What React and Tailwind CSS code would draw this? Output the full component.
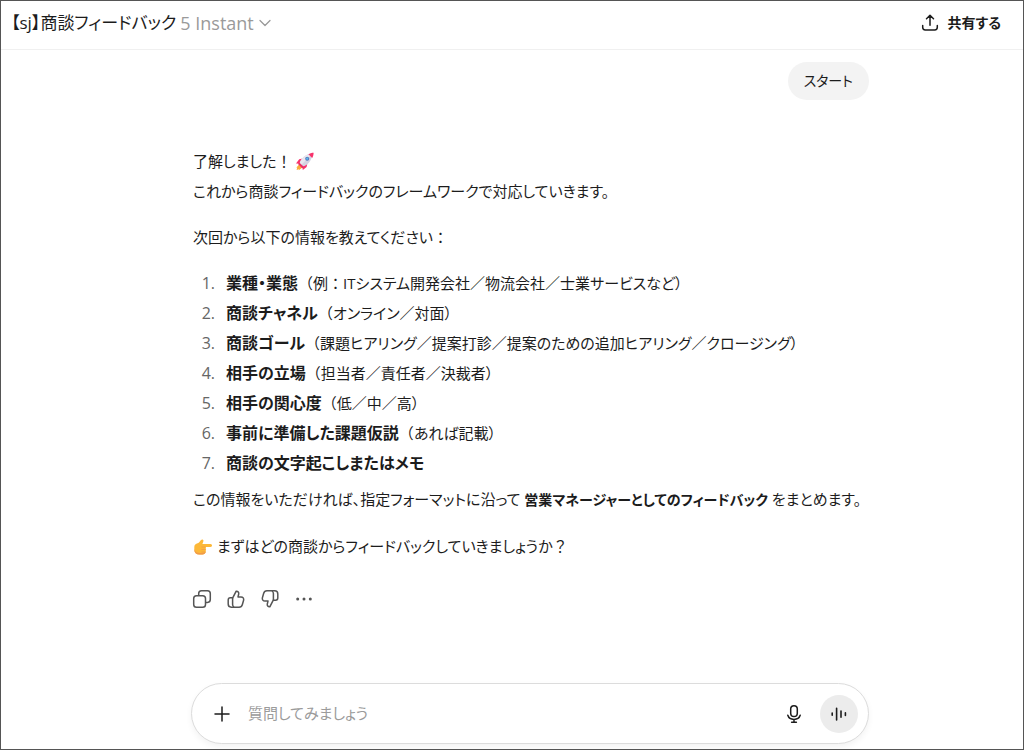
import React from "react";

const ShareIcon = () => (
  <svg viewBox="0 0 20 20" className="w-5 h-5" fill="none" stroke="currentColor" strokeWidth="1.5" strokeLinecap="round" strokeLinejoin="round">
    <path d="M10 12.2V2.4M6.5 5.700 10 2.200l3.500 3.500" />
    <path d="M2.700 12.500v1.800A2.600 2.600 0 0 0 5.300 16.900h9.400a2.600 2.600 0 0 0 2.600-2.600v-1.800" />
  </svg>
);

const ChevronIcon = () => (
  <svg viewBox="0 0 14 14" className="w-3.5 h-3.5" fill="none" stroke="currentColor" strokeWidth="1.3" strokeLinecap="round" strokeLinejoin="round">
    <path d="m2 4.5 5 5 5-5" />
  </svg>
);

const CopyIcon = () => (
  <svg viewBox="0 0 20 20" className="w-5 h-5" fill="none" stroke="currentColor" strokeWidth="1.5" strokeLinejoin="round">
    <rect x="1.7" y="6.7" width="11.8" height="11.6" rx="2.8" />
    <path d="M6.7 6.5V4.6a2.8 2.8 0 0 1 2.8-2.8h6a2.8 2.8 0 0 1 2.8 2.8v6a2.8 2.8 0 0 1-2.8 2.8h-1.8" />
  </svg>
);

const ThumbIcon = ({ down }) => (
  <svg
    viewBox="0 0 20 20"
    className={down ? "w-5 h-5 rotate-180" : "w-5 h-5"}
    fill="none"
    stroke="currentColor"
    strokeWidth="1.5"
    strokeLinejoin="round"
  >
    <path d="M6.6 9.2 10.2 2.2c1.8-.2 2.9 1.2 2.5 2.8l-.7 2.9h3.1c1.8 0 3 1.6 2.5 3.3l-1.3 4.5a3.4 3.4 0 0 1-3.3 2.5H5.3a3.1 3.1 0 0 1-3.1-3.1V11a2.2 2.2 0 0 1 2.2-2.2h2.4" />
    <path d="M6.6 9v6.4c0 1.2.5 2 1.4 2.6" />
  </svg>
);

const MoreIcon = () => (
  <svg viewBox="0 0 20 20" className="w-5 h-5" fill="currentColor">
    <circle cx="3.7" cy="10" r="1.5" />
    <circle cx="10" cy="10" r="1.5" />
    <circle cx="16.3" cy="10" r="1.5" />
  </svg>
);

const PlusIcon = () => (
  <svg viewBox="0 0 20 20" className="w-5 h-5" fill="none" stroke="currentColor" strokeWidth="1.5" strokeLinecap="round">
    <path d="M10 3v14M3 10h14" />
  </svg>
);

const MicIcon = () => (
  <svg viewBox="0 0 20 20" className="w-5 h-5" fill="none" stroke="currentColor" strokeWidth="1.5" strokeLinecap="round">
    <rect x="6.7" y="1.7" width="6.6" height="10.8" rx="3.3" />
    <path d="M3.8 11.3c.8 2.6 3.1 4.1 6.2 4.1s5.4-1.5 6.2-4.1M10 15.5v2.6M7.6 18.2h4.8" />
  </svg>
);

const VoiceIcon = () => (
  <svg viewBox="0 0 20 20" className="w-5 h-5" fill="none" stroke="currentColor" strokeWidth="1.6" strokeLinecap="round">
    <path d="M3.2 9v2.2M7.6 4.3v11.6M12 7v6.2M16.4 8.7v2.8" />
  </svg>
);

const RocketIcon = () => (
  <svg viewBox="0 0 20 20" role="img" aria-label="ロケット" className="inline-block w-5 h-5 align-[-4px]">
    <path d="M5.2 12.2 1.2 16.8l1-.2-.6 2.4 2.4-.7-.2 1 4.5-3.6z" fill="#fbab3a" />
    <path d="m7.8 7.6-3.6.6L1 12.4l4.6.3zM12.4 12.2l-.8 3.8L7.8 19l-.6-4.6z" fill="#f8316b" />
    <path d="M4.6 12.2C6 7.4 10.4 3 17.6 2.2c-.6 7-4.4 11.6-9.6 13.4z" fill="#d5d3e2" />
    <path d="M4.6 12.2C6 7.4 10.4 3 17.6 2.2L6.2 14z" fill="#e9e6ef" />
    <path d="M13.4 3.2c1.4-.9 3.3-1.5 5.2-1.5 0 2-.5 3.8-1.4 5.2z" fill="#f8316b" />
    <circle cx="12.2" cy="7.7" r="2" fill="#5178b5" />
    <circle cx="12.2" cy="7.7" r="1.1" fill="#5cb5f2" />
    <path d="m4.2 11.4 4.8 4.6-1.8 1.2-4.2-4.2z" fill="#e92f66" />
  </svg>
);

const PointIcon = () => (
  <svg viewBox="0 0 20 20" role="img" aria-label="右向きの指" className="inline-block w-5 h-5 align-[-5px]">
    <path d="M1.3 10c0-2 1.5-3.1 3.3-3.7C6.3 5.7 7 3.6 8.600 2.7c1.3-.7 2.3.6 1.7 1.9L9.4 7h8.100c2 0 2 3 0 3h-4.700v4.200c0 1.900-1.500 3.300-3.400 3.300H6.200c-3 0-4.900-2-4.900-4.800z" fill="#fcb838" />
    <path d="M1.3 12c1 3.2 2.8 4 5.3 4h2.8c1.6 0 2.7-.6 3.3-1.5-.1 1.7-1.500 3-3.300 3H6.200c-3 0-4.900-2-4.900-4.800z" fill="#f19a4a" />
    <path d="M8.6 10h4.2M8.4 12.5h4.4M8.4 15h4" stroke="#f19a4a" strokeWidth=".8" />
  </svg>
);

// full-width punctuation keeps its whole em box
const Wide = ({ children }) => <span className="[font-feature-settings:normal]">{children}</span>;

const items = [
  {
    title: "業種・業態",
    note: (
      <>
        例<Wide>：</Wide>ITシステム開発会社／物流会社／士業サービスなど
      </>
    ),
  },
  { title: "商談チャネル", note: "オンライン／対面" },
  { title: "商談ゴール", note: "課題ヒアリング／提案打診／提案のための追加ヒアリング／クロージング" },
  { title: "相手の立場", note: "担当者／責任者／決裁者" },
  { title: "相手の関心度", note: "低／中／高" },
  { title: "事前に準備した課題仮説", note: "あれば記載" },
  { title: "商談の文字起こしまたはメモ" },
];

const actions = [
  { label: "コピーする", icon: <CopyIcon /> },
  { label: "良い回答です", icon: <ThumbIcon /> },
  { label: "良くない回答です", icon: <ThumbIcon down /> },
  { label: "その他", icon: <MoreIcon /> },
];

const Header = () => (
  <header className="flex items-center justify-between h-[49px] pl-2.5 pr-[22px] pb-1 border-b border-[#f0f0f0]">
    <button type="button" className="flex items-center text-[17px] whitespace-nowrap">
      <span>【sj】商談フィードバック</span>
      <span className="ml-1 text-lg text-[#9a9a9a]">5 Instant</span>
      <span className="ml-1 text-[#9a9a9a]">
        <ChevronIcon />
      </span>
    </button>
    <button type="button" className="flex items-center gap-2 text-sm font-bold">
      <ShareIcon />
      共有する
    </button>
  </header>
);

const Answer = () => (
  <article className="mt-[46px] pl-0.5 text-[15px] leading-[30px]">
    <p>
      了解しました<Wide>！</Wide> <RocketIcon />
      <br />
      これから商談フィードバックのフレームワークで対応していきます。
    </p>
    <p className="mt-4">
      次回から以下の情報を教えてください<Wide>：</Wide>
    </p>
    <ol className="mt-4">
      {items.map((item, i) => (
        <li key={item.title} className="flex items-baseline">
          <span className="w-[22px] mr-[11px] text-right text-base leading-[30px] font-medium text-[#666]">{i + 1}.</span>
          <span>
            <strong className="text-base leading-[30px]">{item.title}</strong>
            {item.note && (
              <>
                <Wide>（</Wide>
                {item.note}）
              </>
            )}
          </span>
        </li>
      ))}
    </ol>
    <p className="mt-1.5">
      この情報をいただければ、指定フォーマットに沿って{" "}
      <strong className="text-sm leading-[30px]">営業マネージャーとしてのフィードバック</strong> をまとめます。
    </p>
    <p className="mt-4">
      <PointIcon /> まずはどの商談からフィードバックしていきましょうか<Wide>？</Wide>
    </p>
  </article>
);

const Composer = () => (
  <form
    onSubmit={(e) => e.preventDefault()}
    className="flex items-center h-[61px] mt-auto mb-[5px] pl-5 pr-2.5 rounded-full border border-[#dcdcdc] bg-white shadow-[0_3px_6px_rgba(0,0,0,0.05)]"
  >
    <button type="button" aria-label="追加">
      <PlusIcon />
    </button>
    <input
      type="text"
      aria-label="質問"
      placeholder="質問してみましょう"
      className="flex-1 min-w-0 ml-4 text-[15px] outline-none placeholder:text-[#9b9b9b]"
    />
    <button type="button" aria-label="音声入力" className="mr-4">
      <MicIcon />
    </button>
    <button type="button" aria-label="音声モード" className="flex items-center justify-center w-[38px] h-[38px] rounded-full bg-[#ececec]">
      <VoiceIcon />
    </button>
  </form>
);

const App = () => (
  <div className="flex flex-col min-h-screen border border-[#555] bg-white text-[#1c1c1c] font-['Open_Sans','Noto_Sans_CJK_JP',sans-serif] [font-feature-settings:'palt']">
    <Header />
    <main className="flex flex-col flex-1 w-full pl-9">
      <div className="flex flex-col flex-1 w-full max-w-[678px] mx-auto">
        <div className="self-end mt-3 px-4 py-1 rounded-full bg-[#f3f3f3] text-sm leading-[30px]">スタート</div>
        <Answer />
        <div className="flex gap-3.5 mt-7 ml-px mb-6 text-[#555]">
          {actions.map((action) => (
            <button key={action.label} type="button" aria-label={action.label}>
              {action.icon}
            </button>
          ))}
        </div>
        <Composer />
      </div>
    </main>
  </div>
);

export default App;
